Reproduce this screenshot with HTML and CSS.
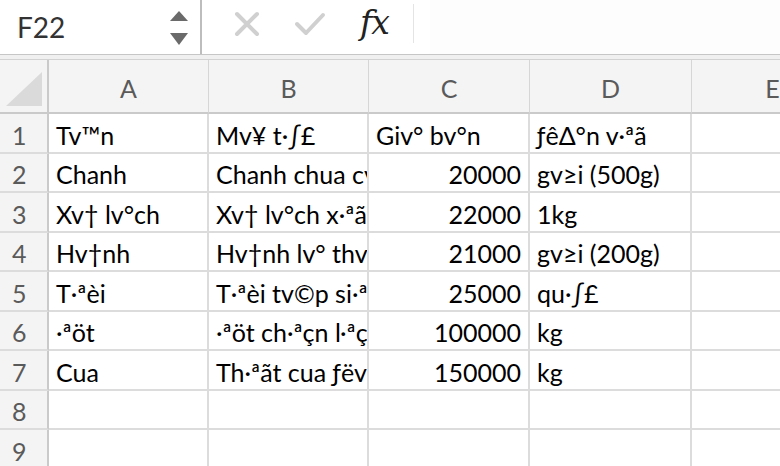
FILE: index.html
```html
<!DOCTYPE html>
<html lang="en">
<head>
  <meta charset="UTF-8" />
  <title>Sheet</title>
  <link rel="stylesheet" href="styles.css">
</head>
<body>

  <div class="toolbar">
    <div class="name-box">
      <span class="ref">F22</span>
      <div class="spinner">
        <svg width="18" height="10" viewBox="0 0 18 10"><polygon points="9,0 18,10 0,10" fill="#6a6a6a"/></svg>
        <svg width="18" height="12" viewBox="0 0 18 12"><polygon points="0,0 18,0 9,12" fill="#6a6a6a"/></svg>
      </div>
    </div>
    <div class="actions">
      <svg class="icon cancel" width="26" height="26" viewBox="0 0 26 26">
        <path d="M3 3 L23 23 M23 3 L3 23" stroke="#d0d0d0" stroke-width="4" stroke-linecap="round"/>
      </svg>
      <svg class="icon enter" width="32" height="26" viewBox="0 0 32 26">
        <path d="M3 13 L12 22 L29 4" stroke="#d0d0d0" stroke-width="4" fill="none" stroke-linecap="round" stroke-linejoin="round"/>
      </svg>
      <span class="fx">fx</span>
    </div>
    <div class="formula"></div>
  </div>
  <div class="strip"></div>

  <div class="sheet">
    <div class="corner"><span class="tri"></span></div>
    <div class="col-head">A</div>
    <div class="col-head">B</div>
    <div class="col-head">C</div>
    <div class="col-head">D</div>
    <div class="col-head">E</div>

    <div class="row-head">1</div>
    <div class="cell">Tv™n</div>
    <div class="cell">Mv¥ t·∫£</div>
    <div class="cell">Giv° bv°n</div>
    <div class="cell">ƒêΔ°n v·ªã</div>
    <div class="cell"></div>

    <div class="row-head">2</div>
    <div class="cell">Chanh</div>
    <div class="cell">Chanh chua cv°c lo·∫°i</div>
    <div class="cell num">20000</div>
    <div class="cell">gv≥i (500g)</div>
    <div class="cell"></div>

    <div class="row-head">3</div>
    <div class="cell">Xv† lv°ch</div>
    <div class="cell">Xv† lv°ch x·ªãt</div>
    <div class="cell num">22000</div>
    <div class="cell">1kg</div>
    <div class="cell"></div>

    <div class="row-head">4</div>
    <div class="cell">Hv†nh</div>
    <div class="cell">Hv†nh lv° thv¨m</div>
    <div class="cell num">21000</div>
    <div class="cell">gv≥i (200g)</div>
    <div class="cell"></div>

    <div class="row-head">5</div>
    <div class="cell">T·ªèi</div>
    <div class="cell">T·ªèi tv©p si·ªáng</div>
    <div class="cell num">25000</div>
    <div class="cell">qu·∫£</div>
    <div class="cell"></div>

    <div class="row-head">6</div>
    <div class="cell">·ªöt</div>
    <div class="cell">·ªöt ch·ªçn l·ªçc</div>
    <div class="cell num">100000</div>
    <div class="cell">kg</div>
    <div class="cell"></div>

    <div class="row-head">7</div>
    <div class="cell">Cua</div>
    <div class="cell">Th·ªãt cua ƒëv¥ng</div>
    <div class="cell num">150000</div>
    <div class="cell">kg</div>
    <div class="cell"></div>

    <div class="row-head">8</div>
    <div class="cell"></div>
    <div class="cell"></div>
    <div class="cell"></div>
    <div class="cell"></div>
    <div class="cell"></div>

    <div class="row-head">9</div>
    <div class="cell"></div>
    <div class="cell"></div>
    <div class="cell"></div>
    <div class="cell"></div>
    <div class="cell"></div>
  </div>

</body>
</html>
```

FILE: styles.css
```css
* {
  margin: 0;
  padding: 0;
  box-sizing: border-box;
}

html, body {
  width: 100%;
  height: 100%;
  overflow: hidden;
  background: #fff;
  font-family: Lato, 'Open Sans', sans-serif;
  color: #000;
}

/* formula bar */

.toolbar {
  display: flex;
  height: 55px;
  border-bottom: 1px solid #c6c6c6;
  background: #fff;
}

.name-box {
  width: 202px;
  display: flex;
  align-items: center;
  justify-content: space-between;
  padding: 0 12px 0 17px;
  border-right: 2px solid #bdbdbd;
}

.ref {
  font-size: 28px;
  color: #333;
}

.spinner {
  display: flex;
  flex-direction: column;
  gap: 12px;
  padding-top: 2px;
}

.spinner svg {
  display: block;
}

.actions {
  display: flex;
  align-items: center;
  width: 212px;
  padding-left: 32px;
  border-right: 1px solid #e4e4e4;
  margin: 4px 0 11px;
}

.icon.enter {
  margin-left: 34px;
}

.fx {
  margin-left: 34px;
  font-family: 'DejaVu Serif', 'Liberation Serif', serif;
  font-style: italic;
  font-size: 33px;
  letter-spacing: -1px;
  color: #222;
  padding-bottom: 2px;
}

.formula {
  flex: 1;
  margin-left: 16px;
  background: #fdfdfd;
}

.strip {
  height: 5px;
  background: #f0f0f0;
  border-bottom: 1px solid #d2d2d2;
}

/* grid */

.sheet {
  display: grid;
  grid-template-columns: 49px 160px 160px 161px 162px 162px;
  grid-template-rows: 54px;
  grid-auto-rows: 39.5px;
  width: 854px;
  font-size: 25px;
}

.corner,
.col-head {
  background: #f4f4f4;
  border-right: 1px solid #d6d6d6;
  border-bottom: 2px solid #cacaca;
}

.corner {
  position: relative;
  border-right: 2px solid #cacaca;
}

.corner .tri {
  position: absolute;
  left: 6px;
  top: 12px;
  width: 36px;
  height: 34px;
  background: #dadada;
  clip-path: polygon(100% 0, 100% 100%, 0 100%);
}

.col-head {
  display: flex;
  align-items: center;
  justify-content: center;
  color: #5a5a5a;
  padding-top: 4px;
}

.row-head {
  display: flex;
  align-items: center;
  padding: 4px 0 0 12px;
  background: #f4f4f4;
  color: #5a5a5a;
  border-right: 2px solid #cacaca;
  border-bottom: 2px solid #dcdcdc;
}

.cell {
  display: flex;
  align-items: center;
  padding: 4px 7px 0 7px;
  white-space: nowrap;
  overflow: hidden;
  border-right: 2px solid #dcdcdc;
  border-bottom: 2px solid #dcdcdc;
}

.cell.num {
  justify-content: flex-end;
}
```
